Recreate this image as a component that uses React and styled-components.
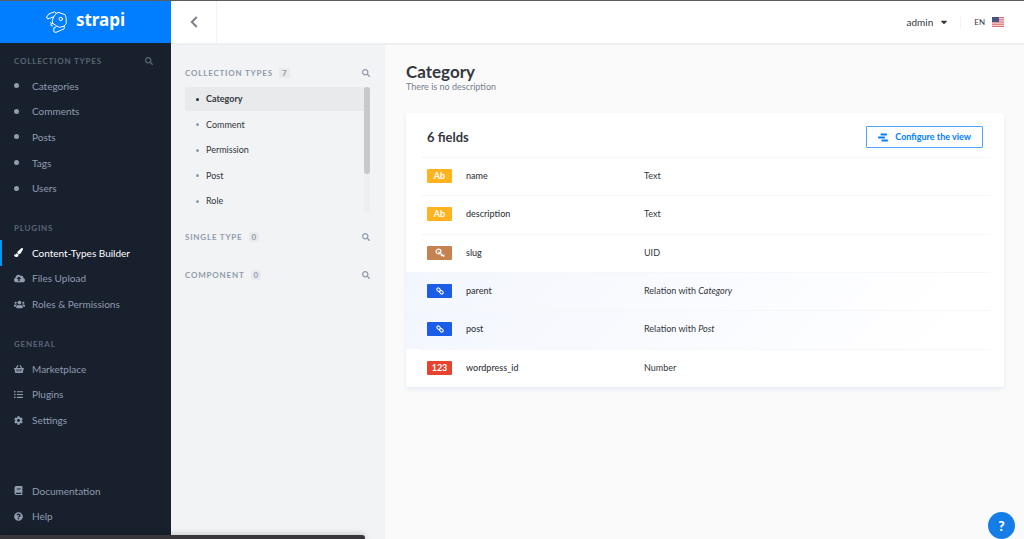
import React from 'react'
import styled, { createGlobalStyle } from 'styled-components'
import {
    FaBook,
    FaCaretDown,
    FaCloudUploadAlt,
    FaCog,
    FaListUl,
    FaPaintBrush,
    FaQuestionCircle,
    FaSearch,
    FaShoppingBasket,
    FaUsers,
} from 'react-icons/fa'

const GlobalStyle = createGlobalStyle`
    * {
        box-sizing: border-box;
    }
    body {
        margin: 0;
        background: #fafafb;
        color: #333740;
        font-family: Lato, 'Open Sans', sans-serif;
        font-size: 10px;
        line-height: 14px;
    }
    button {
        padding: 0;
        border: 0;
        background: none;
        color: inherit;
        font: inherit;
        cursor: pointer;
    }
    a {
        color: inherit;
        text-decoration: none;
    }
    ul {
        margin: 0;
        padding: 0;
        list-style: none;
    }
    svg {
        display: block;
    }
`;
const Page = styled.div`
    display: flex;
    min-height: 100vh;
    border-top: 1px solid #5c5c63;
`;

/* left menu */
const Sidebar = styled.nav`
    flex: 0 0 171px;
    display: flex;
    flex-direction: column;
    background: #18202e;
    color: #919bae;
`;
const Brand = styled.a`
    display: flex;
    align-items: center;
    justify-content: center;
    gap: 9px;
    height: 42px;
    margin-bottom: 6px;
    background: #007eff;
    color: #fff;
    font-family: 'Noto Sans', sans-serif;
    font-size: 17px;
    font-weight: 700;
    line-height: 20px;
`;
const BrandName = styled.span`
    padding-bottom: 4px;
`;
const MenuSection = styled.section`
    margin-bottom: 15px;
    &:last-child {
        margin: auto 0 10px;
    }
`;
const SectionTitle = styled.h2`
    margin: 0;
    font-size: 8px;
    font-weight: 700;
    letter-spacing: 0.1em;
    text-transform: uppercase;
`;
const MenuHeading = styled.header`
    display: flex;
    align-items: center;
    justify-content: space-between;
    height: 24px;
    padding: 0 18px 0 14px;
    color: #5b6473;
`;
const MenuList = styled.ul`
    display: grid;
    grid-auto-rows: 1fr;
    height: ${({ $height }) => $height}px;
`;
const MenuLink = styled.a`
    display: grid;
    grid-template-columns: 18px 1fr;
    align-items: center;
    height: 100%;
    padding-left: 12px;
    border-left: 2px solid ${({ $active }) => ($active ? '#0097f6' : 'transparent')};
    color: ${({ $active }) => ($active ? '#fff' : 'inherit')};
`;
const Dot = styled.span`
    width: 5px;
    height: 5px;
    border-radius: 50%;
    background: currentColor;
`;

/* top bar */
const Body = styled.div`
    flex: 1;
    min-width: 0;
    display: flex;
    flex-direction: column;
`;
const TopBar = styled.header`
    display: flex;
    align-items: center;
    height: 44px;
    padding-right: 20px;
    border-bottom: 2px solid #eeeff0;
    background: #fff;
`;
const BackButton = styled.button`
    display: flex;
    align-items: center;
    justify-content: center;
    width: 46px;
    height: 42px;
    margin-right: auto;
    border-right: 1px solid #f2f3f4;
    color: #7d8087;
`;
const UserMenu = styled.button`
    display: flex;
    align-items: center;
    gap: 6px;
    height: 14px;
    padding-right: 11px;
    border-right: 1px solid #f2f3f4;
`;
const LanguageMenu = styled.button`
    display: flex;
    align-items: center;
    gap: 7px;
    margin-left: 13px;
    font-size: 8px;
`;
const Columns = styled.div`
    flex: 1;
    display: flex;
    font-size: 9px;
`;

/* content types column */
const TypesPanel = styled.aside`
    flex: 0 0 214px;
    padding: 16px 15px 0 14px;
    background: #f2f3f4;
    color: #919bae;
`;
const TypesHeading = styled.header`
    display: flex;
    align-items: center;
    height: 24px;
    button {
        margin-left: auto;
    }
`;
const Count = styled.span`
    margin-left: 6px;
    padding: 0 3px;
    border-radius: 2px;
    background: #e9eaeb;
    font-size: 8px;
    font-weight: 700;
    line-height: 10px;
`;
const TypesScroll = styled.div`
    position: relative;
    margin: 2px 0 10px;
`;
const TypesList = styled.ul`
    display: grid;
    grid-auto-rows: 1fr;
    height: 128px;
`;
const TypeLink = styled.a`
    display: flex;
    align-items: center;
    gap: 7px;
    height: 24px;
    padding-left: 11px;
    border-radius: 2px;
    background: ${({ $active }) => ($active ? '#e9eaeb' : 'none')};
    color: #333740;
    font-weight: ${({ $active }) => ($active ? 700 : 400)};
    &::before {
        content: '';
        width: 3px;
        height: 3px;
        border-radius: 50%;
        background: ${({ $active }) => ($active ? '#2d3138' : '#919bae')};
    }
`;
const ScrollTrack = styled.div`
    position: absolute;
    top: 0;
    right: 0;
    width: 6px;
    height: 125px;
    background: #eeeeee;
    &::before {
        content: '';
        display: block;
        height: 87px;
        border-radius: 3px;
        background: #c9c9c9;
    }
`;
const EmptyType = styled.section`
    margin-bottom: 14px;
`;

/* main area */
const Main = styled.main`
    flex: 1;
    min-width: 0;
    padding: 18px 20px 20px 21px;
`;
const Title = styled.h1`
    margin: 0;
    font-size: 17px;
    line-height: 18px;
`;
const Description = styled.p`
    margin: 0 0 20px;
    color: #787e8f;
    line-height: 12px;
`;
const Card = styled.section`
    border-radius: 2px;
    background: #fff;
    box-shadow: 0 2px 4px #e3e9f3;
`;
const CardHeader = styled.header`
    display: flex;
    align-items: center;
    justify-content: space-between;
    height: 44px;
    padding: 4px 21px 0;
    h2 {
        margin: 0;
        font-size: 13px;
        line-height: 16px;
    }
`;
const ConfigureButton = styled.button`
    display: flex;
    align-items: center;
    gap: 6px;
    height: 22px;
    padding: 0 11px;
    border: 1px solid #4da3ff;
    border-radius: 1px;
    color: #007eff;
    font-weight: 700;
`;
const FieldsTable = styled.table`
    width: 100%;
    height: 230px;
    border-collapse: collapse;
    table-layout: fixed;
    td {
        padding: 0;
    }
    td:first-child {
        width: 60px;
        padding-left: 21px;
    }
    td:nth-child(2) {
        width: 178px;
    }
`;
const FieldRow = styled.tr`
    background:
        linear-gradient(#f6f7f9, #f6f7f9) 14px 0 / calc(100% - 28px) 1px no-repeat,
        ${({ $relation }) => ($relation ? 'linear-gradient(135deg, #f3f6fe, #fff 90%)' : 'none')};
`;
const FieldName = styled.span`
    font-weight: 500;
`;
const badgeColors = {
    text: '#ffb41f',
    uid: '#c5814f',
    relation: '#1c5de7',
    number: '#e8432f',
};
const Badge = styled.span`
    display: flex;
    align-items: center;
    justify-content: center;
    width: 25px;
    height: 14px;
    border-radius: 1px;
    background: ${({ $type }) => badgeColors[$type]};
    color: #fff;
    font-size: 9px;
    font-weight: 700;
`;
const HelpButton = styled.button`
    position: fixed;
    right: 9px;
    bottom: 0;
    width: 27px;
    height: 27px;
    border-radius: 50%;
    background: #147de8;
    color: #fff;
    font-size: 14px;
    font-weight: 900;
`;
const StatusBar = styled.div`
    position: fixed;
    left: 0;
    bottom: 0;
    width: 365px;
    height: 4px;
    border-radius: 0 3px 0 0;
    background: #38363a;
    box-shadow: 0 0 6px rgba(0, 0, 0, 0.3);
`;

const StrapiLogo = () => (
    <svg width="21" height="22" viewBox="0 0 21 22" fill="none" stroke="#fff" strokeWidth="1" strokeLinejoin="round" strokeLinecap="round">
        <path d="M.6 6.2 2.7 3 8.6.8l1.8 1.4L13 1.5l6.2 2.3 1 3.6v5.4l-2.4 2.4-4.3 1.2-3.2-1.6-3.6-2.6" />
        <path d="M.6 6.2 1.7 8l6-2.2 2.7-3.6M7.7 5.8 6.3 9.4l.4 3.3" />
        <circle cx="14.8" cy="7.9" r="1.7" />
        <path d="m4.3 11.6 1.8 1.1-1.5 1.1 2 1.2M7.8 17.2v3.6l2.2.6 8.2-3.6v-2.9M7.8 17.2l2.5-1.6" />
    </svg>
)
const ChevronLeft = () => (
    <svg width="8" height="12" viewBox="0 0 8 12" fill="none" stroke="currentColor" strokeWidth="2">
        <path d="M6.8 1 1.8 6l5 5" />
    </svg>
)
const Flag = () => (
    <svg width="12" height="10" viewBox="0 0 12 10">
        <path fill="#f6e9ea" d="M0 0h12v10H0z" />
        <path stroke="#d8606a" strokeWidth=".9" d="M0 .5h12M0 2.3h12M0 4.1h12M0 5.9h12M0 7.7h12M0 9.5h12" />
        <path fill="#45557f" d="M0 0h7v5H0z" />
    </svg>
)
const LayoutIcon = () => (
    <svg width="11" height="9" viewBox="0 0 11 9" fill="currentColor">
        <rect x="2.5" y=".5" width="6.5" height="2" rx=".8" />
        <rect x="0" y="3.5" width="7" height="2" rx=".8" />
        <rect x="3.5" y="6.5" width="6.5" height="2" rx=".8" />
    </svg>
)
const KeyIcon = () => (
    <svg width="10" height="10" viewBox="0 0 10 10" fill="none" stroke="currentColor" strokeWidth="1.2">
        <circle cx="3.5" cy="3.5" r="2.4" />
        <path d="m3.4 3.6 5.8 5.2M7.2 6.8 6 8.2M9.4 6.6 8 8.2" />
    </svg>
)
const LinkIcon = () => (
    <svg width="8" height="8" viewBox="0 0 8 8" fill="none" stroke="currentColor" strokeWidth="1">
        <rect x=".7" y="1.3" width="3.8" height="2.8" rx="1.4" transform="rotate(45 2.6 2.7)" />
        <rect x="3.5" y="3.9" width="3.8" height="2.8" rx="1.4" transform="rotate(45 5.4 5.3)" />
    </svg>
)

const collectionTypes = ['Categories', 'Comments', 'Posts', 'Tags', 'Users']
const plugins = [
    { label: 'Content-Types Builder', icon: <FaPaintBrush size={9} />, active: true },
    { label: 'Files Upload', icon: <FaCloudUploadAlt size={11} /> },
    { label: 'Roles & Permissions', icon: <FaUsers size={11} /> },
]
const general = [
    { label: 'Marketplace', icon: <FaShoppingBasket size={10} /> },
    { label: 'Plugins', icon: <FaListUl size={9} /> },
    { label: 'Settings', icon: <FaCog size={9} /> },
]
const support = [
    { label: 'Documentation', icon: <FaBook size={9} /> },
    { label: 'Help', icon: <FaQuestionCircle size={9} /> },
]
const types = ['Category', 'Comment', 'Permission', 'Post', 'Role']
const fields = [
    { name: 'name', type: 'text', badge: 'Ab', label: 'Text' },
    { name: 'description', type: 'text', badge: 'Ab', label: 'Text' },
    { name: 'slug', type: 'uid', badge: <KeyIcon />, label: 'UID' },
    { name: 'parent', type: 'relation', badge: <LinkIcon />, label: 'Relation with ', target: 'Category' },
    { name: 'post', type: 'relation', badge: <LinkIcon />, label: 'Relation with ', target: 'Post' },
    { name: 'wordpress_id', type: 'number', badge: '123', label: 'Number' },
]

const Menu = ({ title, items, height, search }) => (
    <MenuSection>
        {title && (
            <MenuHeading>
                <SectionTitle>{title}</SectionTitle>
                {search && <button aria-label="Search"><FaSearch size={8} /></button>}
            </MenuHeading>
        )}
        <MenuList $height={height}>
            {items.map(({ label, icon, active }) => (
                <li key={label}>
                    <MenuLink href="#" $active={active}>
                        {icon || <Dot />}
                        <span>{label}</span>
                    </MenuLink>
                </li>
            ))}
        </MenuList>
    </MenuSection>
)

const TypesTitle = ({ title, count }) => (
    <TypesHeading>
        <SectionTitle>{title}</SectionTitle>
        <Count>{count}</Count>
        <button aria-label="Search"><FaSearch size={8} /></button>
    </TypesHeading>
)

export default function App() {
    return (
        <Page>
            <GlobalStyle />
            <Sidebar>
                <Brand href="#">
                    <StrapiLogo />
                    <BrandName>strapi</BrandName>
                </Brand>
                <Menu title="Collection Types" items={collectionTypes.map((label) => ({ label }))} height={128} search />
                <Menu title="Plugins" items={plugins} height={77} />
                <Menu title="General" items={general} height={77} />
                <Menu items={support} height={51} />
            </Sidebar>
            <Body>
                <TopBar>
                    <BackButton aria-label="Back"><ChevronLeft /></BackButton>
                    <UserMenu>
                        admin
                        <FaCaretDown size={10} />
                    </UserMenu>
                    <LanguageMenu>
                        EN
                        <Flag />
                    </LanguageMenu>
                </TopBar>
                <Columns>
                    <TypesPanel>
                        <TypesTitle title="Collection Types" count={7} />
                        <TypesScroll>
                            <TypesList>
                                {types.map((type, i) => (
                                    <li key={type}>
                                        <TypeLink href="#" $active={i === 0}>{type}</TypeLink>
                                    </li>
                                ))}
                            </TypesList>
                            <ScrollTrack />
                        </TypesScroll>
                        <EmptyType><TypesTitle title="Single Type" count={0} /></EmptyType>
                        <EmptyType><TypesTitle title="Component" count={0} /></EmptyType>
                    </TypesPanel>
                    <Main>
                        <Title>Category</Title>
                        <Description>There is no description</Description>
                        <Card>
                            <CardHeader>
                                <h2>6 fields</h2>
                                <ConfigureButton>
                                    <LayoutIcon />
                                    Configure the view
                                </ConfigureButton>
                            </CardHeader>
                            <FieldsTable>
                                <tbody>
                                    {fields.map(({ name, type, badge, label, target }) => (
                                        <FieldRow key={name} $relation={type === 'relation'}>
                                            <td><Badge $type={type}>{badge}</Badge></td>
                                            <td><FieldName>{name}</FieldName></td>
                                            <td>{label}{target && <em>{target}</em>}</td>
                                        </FieldRow>
                                    ))}
                                </tbody>
                            </FieldsTable>
                        </Card>
                    </Main>
                </Columns>
            </Body>
            <HelpButton aria-label="Help">?</HelpButton>
            <StatusBar />
        </Page>
    )
}
